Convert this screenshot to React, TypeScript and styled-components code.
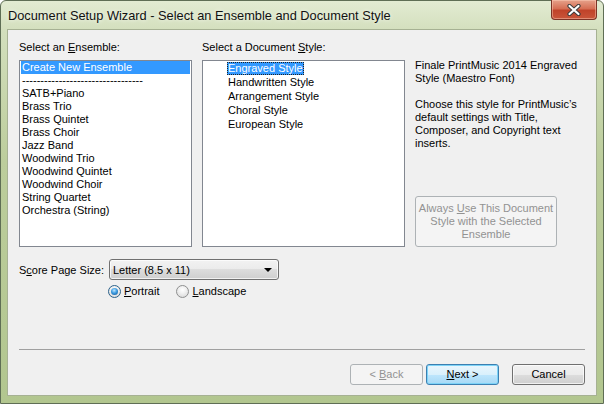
import styled, { createGlobalStyle, css } from "styled-components";

const GlobalStyle = createGlobalStyle`
  html, body {
    margin: 0;
    padding: 0;
    background: #fff;
  }
  body {
    font-family: "Liberation Sans", Arial, sans-serif;
    font-size: 11px;
    color: #000;
  }
  * { box-sizing: border-box; }
  u { text-decoration: underline; text-underline-offset: 1px; }
`;

const Window = styled.div`
  width: 604px;
  height: 404px;
  border: 1px solid #5f6e55;
  border-radius: 6px 6px 0 0;
  background: linear-gradient(#e2ebd2 0, #d3dfbd 30px, #bccd9c 160px, #b2c68f 100%);
  display: flex;
  flex-direction: column;
  padding: 0 6px 7px 6px;
`;

const TitleBar = styled.div`
  height: 28px;
  display: flex;
  align-items: flex-start;
  padding-left: 1px;
`;

const Title = styled.div`
  font-family: "Liberation Sans", Arial, sans-serif;
  font-size: 12.8px;
  color: #111;
  margin-top: 7px;
  text-shadow: 0 0 4px rgba(255, 255, 255, 0.9);
`;

const CloseButton = styled.div`
  margin-left: auto;
  margin-top: -1px;
  width: 46px;
  height: 20px;
  border: 1px solid #7c3326;
  border-top: none;
  border-radius: 0 0 4px 4px;
  background: linear-gradient(#e6a28b 0, #d66f54 45%, #c0432a 55%, #c9553a 100%);
  box-shadow: inset 0 0 0 1px rgba(255, 210, 190, 0.45);
  display: flex;
  align-items: center;
  justify-content: center;
`;

const Client = styled.div`
  flex: 1;
  border: 1px solid #a6b193;
  background: #f0f0f0;
  padding: 11px 11px 10px 11px;
  display: flex;
  flex-direction: column;
`;

const Columns = styled.div`
  display: grid;
  grid-template-columns: 173px 203px 1fr;
  grid-template-rows: 13px 187px;
  column-gap: 10px;
  row-gap: 6px;
`;

const FieldLabel = styled.div<{ $col: number }>`
  grid-row: 1;
  grid-column: ${(p) => p.$col};
  line-height: 13px;
  white-space: nowrap;
`;

const ListBox = styled.div<{ $col: number; $indent?: boolean }>`
  grid-row: 2;
  grid-column: ${(p) => p.$col};
  border: 1px solid #828790;
  background: #fff;
  padding: ${(p) => (p.$indent ? "1px 0 0 24px" : "0 1px")};
`;

const Item = styled.div<{ $selected?: boolean }>`
  height: 13px;
  line-height: 13px;
  padding: 0 1px;
  white-space: nowrap;
  overflow: hidden;
  ${(p) =>
    p.$selected &&
    css`
      background: #3399ff;
      color: #fff;
    `}
`;

const StyleItem = styled.div`
  height: 14px;
  line-height: 13px;
  white-space: nowrap;
`;

const StyleName = styled.span<{ $selected?: boolean }>`
  display: inline-block;
  padding: 0 1px;
  ${(p) =>
    p.$selected &&
    css`
      background: #3399ff;
      color: #fff;
      outline: 1px dotted #222;
      outline-offset: -1px;
    `}
`;

const Description = styled.div`
  grid-column: 3;
  grid-row: 2;
  display: flex;
  flex-direction: column;
  justify-content: space-between;
  margin-top: -1px;
`;

const Para = styled.p`
  margin: 0 0 13px 0;
  line-height: 13px;
`;

const Button = styled.div<{ $variant?: "default" | "disabled" }>`
  width: 73px;
  height: 21px;
  border: 1px solid #707070;
  border-radius: 3px;
  background: linear-gradient(#f2f2f2 0, #ebebeb 50%, #dddddd 50%, #cfcfcf 100%);
  box-shadow: inset 0 0 0 1px rgba(255, 255, 255, 0.7);
  display: flex;
  align-items: center;
  justify-content: center;
  line-height: 13px;
  text-align: center;
  ${(p) =>
    p.$variant === "default" &&
    css`
      border-color: #3c7fb1;
      background: linear-gradient(#eaf6fd 0, #d9f0fc 50%, #bee6fd 50%, #a7d9f5 100%);
      box-shadow: inset 0 0 0 1px #7dd3f7;
    `}
  ${(p) =>
    p.$variant === "disabled" &&
    css`
      border-color: #adb2b5;
      background: #f4f4f4;
      box-shadow: none;
      color: #929292;
    `}
`;

const AlwaysButton = styled(Button)`
  width: 142px;
  height: 51px;
  align-self: flex-start;
`;

const PageSizeRow = styled.div`
  display: flex;
  align-items: center;
  margin-top: 12px;
`;

const PageSizeLabel = styled.div`
  width: 90px;
  white-space: nowrap;
`;

const Combo = styled.div`
  width: 170px;
  height: 21px;
  border: 1px solid #707070;
  border-radius: 3px;
  background: linear-gradient(#f2f2f2 0, #ebebeb 50%, #dddddd 50%, #cfcfcf 100%);
  box-shadow: inset 0 0 0 1px rgba(255, 255, 255, 0.7);
  display: flex;
  align-items: center;
  padding: 0 4px 0 3px;
  justify-content: space-between;
`;

const Arrow = styled.span`
  width: 0;
  height: 0;
  border-left: 4px solid transparent;
  border-right: 4px solid transparent;
  border-top: 4px solid #000;
  margin-right: 2px;
`;

const RadioRow = styled.div`
  display: flex;
  align-items: center;
  margin: 5px 0 0 89px;
  gap: 17px;
`;

const RadioOption = styled.label`
  display: flex;
  align-items: center;
  gap: 3px;
  line-height: 13px;
`;

const RadioCircle = styled.span<{ $checked?: boolean }>`
  position: relative;
  width: 13px;
  height: 13px;
  border-radius: 50%;
  border: 1px solid #8e8f8f;
  background: radial-gradient(circle at 50% 35%, #ffffff 0, #f0f0f0 40%, #d4d4d4 100%);
  ${(p) =>
    p.$checked &&
    css`
      border-color: #2c628b;
      &::after {
        content: "";
        position: absolute;
        left: 2px;
        top: 2px;
        width: 7px;
        height: 7px;
        border-radius: 50%;
        background: radial-gradient(circle at 45% 35%, #bfe6ff 0, #3c9be0 45%, #0d4f8f 100%);
      }
    `}
`;

const Spacer = styled.div`
  flex: 1;
`;

const Separator = styled.div`
  border-top: 1px solid #a0a0a0;
  margin-bottom: 14px;
`;

const ButtonRow = styled.div`
  display: flex;
  justify-content: flex-end;
  gap: 3px;
`;

const CancelButton = styled(Button)`
  margin-left: 10px;
`;

const ensembles = [
  "SATB+Piano",
  "Brass Trio",
  "Brass Quintet",
  "Brass Choir",
  "Jazz Band",
  "Woodwind Trio",
  "Woodwind Quintet",
  "Woodwind Choir",
  "String Quartet",
  "Orchestra (String)",
];

const styles = [
  "Engraved Style",
  "Handwritten Style",
  "Arrangement Style",
  "Choral Style",
  "European Style",
];

export default function App() {
  return (
    <>
      <GlobalStyle />
      <Window>
        <TitleBar>
          <Title>Document Setup Wizard - Select an Ensemble and Document Style</Title>
          <CloseButton>
            <svg width="16" height="12" viewBox="0 0 16 12">
              <path d="M3.5 2 L12.5 10 M12.5 2 L3.5 10" stroke="#3b3b3b" strokeWidth="4.2" strokeLinecap="round" />
              <path d="M3.5 2 L12.5 10 M12.5 2 L3.5 10" stroke="#ffffff" strokeWidth="2.2" strokeLinecap="round" />
            </svg>
          </CloseButton>
        </TitleBar>
        <Client>
          <Columns>
            <FieldLabel $col={1}>
              Select an <u>E</u>nsemble:
            </FieldLabel>
            <FieldLabel $col={2}>
              Select a Document <u>S</u>tyle:
            </FieldLabel>
            <ListBox $col={1}>
              <Item $selected>Create New Ensemble</Item>
              <Item>---------------------------------</Item>
              {ensembles.map((e) => (
                <Item key={e}>{e}</Item>
              ))}
            </ListBox>
            <ListBox $col={2} $indent>
              {styles.map((s, i) => (
                <StyleItem key={s}>
                  <StyleName $selected={i === 0}>{s}</StyleName>
                </StyleItem>
              ))}
            </ListBox>
            <Description>
              <div>
                <Para>
                  Finale PrintMusic 2014 Engraved
                  <br />
                  Style (Maestro Font)
                </Para>
                <Para>
                  Choose this style for PrintMusic’s
                  <br />
                  default settings with Title,
                  <br />
                  Composer, and Copyright text
                  <br />
                  inserts.
                </Para>
              </div>
              <AlwaysButton $variant="disabled">
                <span>
                  Always <u>U</u>se This Document
                  <br />
                  Style with the Selected
                  <br />
                  Ensemble
                </span>
              </AlwaysButton>
            </Description>
          </Columns>
          <PageSizeRow>
            <PageSizeLabel>
              S<u>c</u>ore Page Size:
            </PageSizeLabel>
            <Combo>
              <span>Letter (8.5 x 11)</span>
              <Arrow />
            </Combo>
          </PageSizeRow>
          <RadioRow>
            <RadioOption>
              <RadioCircle $checked />
              <span>
                <u>P</u>ortrait
              </span>
            </RadioOption>
            <RadioOption>
              <RadioCircle />
              <span>
                <u>L</u>andscape
              </span>
            </RadioOption>
          </RadioRow>
          <Spacer />
          <Separator />
          <ButtonRow>
            <Button $variant="disabled">
              <span>
                &lt; <u>B</u>ack
              </span>
            </Button>
            <Button $variant="default">
              <span>
                <u>N</u>ext &gt;
              </span>
            </Button>
            <CancelButton>
              <span>Cancel</span>
            </CancelButton>
          </ButtonRow>
        </Client>
      </Window>
    </>
  );
}
